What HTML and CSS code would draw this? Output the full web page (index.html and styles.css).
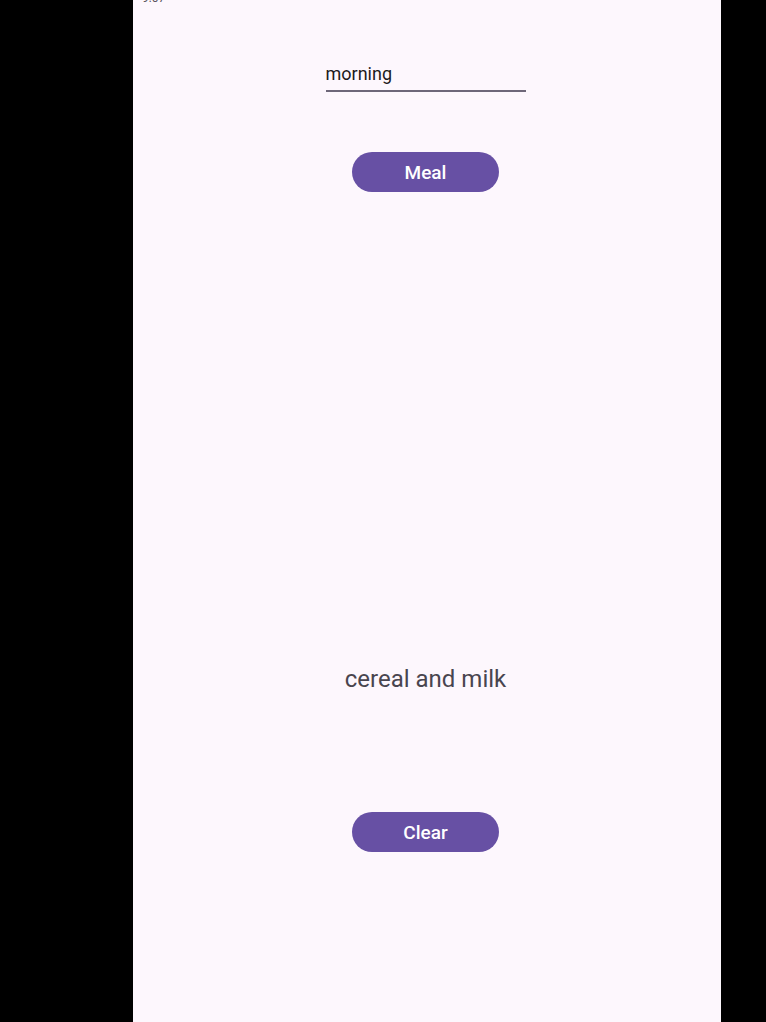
FILE: index.html
```html
<!DOCTYPE html>
<html>
<head>
<meta charset="utf-8">
<link rel="stylesheet" href="styles.css">
</head>
<body>
<div class="screen">
  <div class="phone">
    <div class="status">9:07</div>
    <div class="field">morning</div>
    <button class="btn btn-meal">Meal</button>
    <div class="result">cereal and milk</div>
    <button class="btn btn-clear">Clear</button>
  </div>
</div>
</body>
</html>
```
FILE: styles.css
```css
html, body {
  margin: 0;
  padding: 0;
  background: #000;
  height: 100%;
  overflow: hidden;
}
.screen {
  padding-left: 133px;
  height: 1022px;
}
.phone {
  box-sizing: border-box;
  width: 588px;
  height: 1022px;
  padding-right: 3px;
  background: #fdf7fd;
  display: flex;
  flex-direction: column;
  align-items: center;
  font-family: Roboto, "Liberation Sans", sans-serif;
}
.status {
  align-self: flex-start;
  margin-left: 9px;
  margin-top: -9px;
  font-size: 12px;
  line-height: 14px;
  height: 14px;
  color: #5a5560;
}
.field {
  margin-top: 58px;
  width: 200px;
  font-size: 18px;
  line-height: 21px;
  color: #1d1b20;
  padding-bottom: 6px;
  border-bottom: 2px solid #6e6779;
}
.btn {
  width: 147px;
  height: 40px;
  border: none;
  border-radius: 20px;
  background: #6750a4;
  color: #fff;
  font-family: Roboto, "Liberation Sans", sans-serif;
  font-size: 19px;
  font-weight: 500;
  padding: 0;
}
.btn-meal {
  margin-top: 60px;
}
.result {
  margin-top: 473px;
  font-size: 24px;
  line-height: 28px;
  color: #49454f;
}
.btn-clear {
  margin-top: 119px;
}
```
